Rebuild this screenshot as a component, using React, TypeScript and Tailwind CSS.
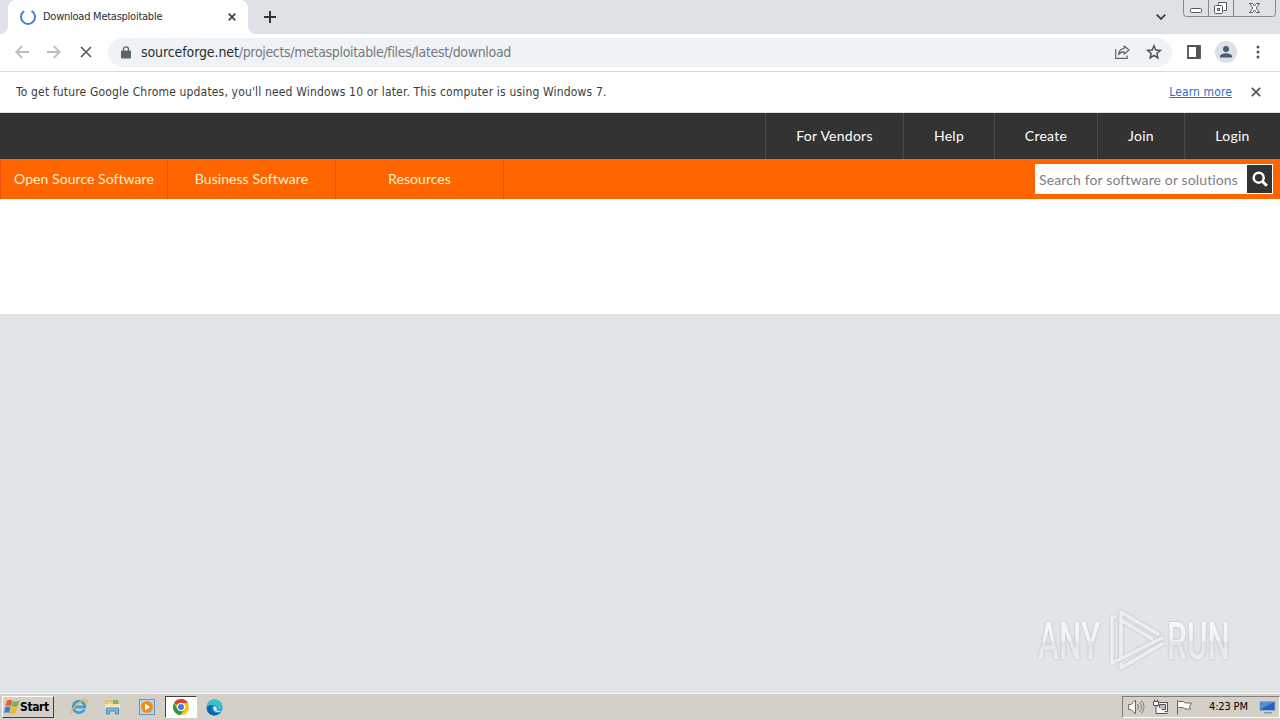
import React from 'react';

interface NavItem {
    label: string;
    width: string;
}

const topLinks: NavItem[] = [
    { label: 'For Vendors', width: 'w-[138px]' },
    { label: 'Help', width: 'w-[91px]' },
    { label: 'Create', width: 'w-[103px]' },
    { label: 'Join', width: 'w-[87px]' },
    { label: 'Login', width: 'w-[96px]' },
];

const menuLinks: string[] = ['Open Source Software', 'Business Software', 'Resources'];

const Cross: React.FC<{ size: number; color: string; stroke?: number }> = ({ size, color, stroke = 1.8 }) => (
    <svg width={size} height={size} viewBox="0 0 12 12" fill="none" stroke={color} strokeWidth={stroke}>
        <path d="M1 1l10 10M11 1L1 11" />
    </svg>
);

const TabStrip: React.FC = () => (
    <div className="relative flex h-[34px] bg-[#dee1e6]">
        <div className="relative ml-2 flex h-full w-60 items-center rounded-t-lg bg-white pl-3">
            <svg className="absolute bottom-0 -left-2" width="8" height="8"><path d="M8 0v8H0a8 8 0 0 0 8-8z" fill="#fff" /></svg>
            <svg className="absolute -right-2 bottom-0" width="8" height="8"><path d="M0 0v8h8a8 8 0 0 1-8-8z" fill="#fff" /></svg>
            <svg width="16" height="16" viewBox="0 0 16 16" fill="none" stroke="#4a7fd8" strokeWidth="2">
                <path d="M4.2 2.1A7 7 0 1 0 11.5 1.9" />
            </svg>
            <span className="mt-px ml-[7px] text-[11px] tracking-[-0.25px] whitespace-nowrap text-[#2b2c2f]">Download Metasploitable</span>
            <div className="absolute right-3 top-[13px]"><Cross size={8} color="#3c4043" stroke={2.4} /></div>
        </div>
        <svg className="mt-[11px] ml-4" width="12" height="12" stroke="#2f3236" strokeWidth="2"><path d="M6 0v12M0 6h12" /></svg>
        <svg className="mt-[14px] mr-[114px] ml-auto" width="10" height="6" fill="none" stroke="#3c4043" strokeWidth="1.8"><path d="M.7.7L5 5 9.3.7" /></svg>
        <svg className="absolute top-0 right-[3px]" width="94" height="18" fill="none">
            <path d="M.5 0v13.500a3 3 0 0 0 3 3h86a3 3 0 0 0 3-3V0M25.500 0v16M50.500 0v16" stroke="#85888d" />
            <rect x="7.500" y="8.500" width="11" height="4" rx="1" fill="#fff" stroke="#55585d" />
            <path d="M35.500 4.500V2.500h8v8h-3" fill="#fff" stroke="#55585d" />
            <rect x="31.500" y="5.500" width="8" height="8" rx="1" fill="#fff" stroke="#55585d" />
            <rect x="34.500" y="8.500" width="2" height="2" stroke="#55585d" />
            <path d="M66.500 3.500h3l2 2.500 2-2.500h3l-3.300 4.500 3.300 4.500h-3l-2-2.500-2 2.500h-3l3.300-4.500z" fill="#fff" stroke="#55585d" />
        </svg>
    </div>
);

const Toolbar: React.FC = () => (
    <div className="flex h-[38px] items-center border-b border-[#d9dadc] bg-white pb-px pl-[15px]">
        <svg width="14" height="14" fill="none" stroke="#babcbe" strokeWidth="1.8"><path d="M14 7H1.500M7.300 1L1.300 7l6 6" /></svg>
        <svg className="ml-[18px]" width="14" height="14" fill="none" stroke="#babcbe" strokeWidth="1.8"><path d="M0 7h12.500M6.700 1l6 6-6 6" /></svg>
        <div className="ml-[19px]"><Cross size={12} color="#5a5d61" stroke={1.7} /></div>
        <div className="ml-4 flex h-[29px] w-[1064px] items-center rounded-full bg-[#f0f3f5] pl-[13px]">
            <svg width="10" height="13" viewBox="0 0 10 13">
                <path d="M2.500 5V3.300a2.500 2.500 0 0 1 5 0V5" fill="none" stroke="#5f6368" strokeWidth="1.300" />
                <rect y="4.500" width="10" height="8" rx="1" fill="#5f6368" />
            </svg>
            <div className="mt-px ml-[10px] text-[14px] tracking-[-0.33px] whitespace-nowrap text-[#74787d]">
                <span className="tracking-[-0.1px] text-[#2c2d31]">sourceforge.net</span>/projects/metasploitable/files/latest/download
            </div>
            <svg className="ml-auto" width="15" height="14" fill="none" stroke="#5f6368" strokeWidth="1.200">
                <path d="M.7 4v9.300h11.500V10.500" />
                <path d="M9.200 1l4.800 4-4.800 4V6.800C6.500 6.700 4.800 7.600 3.500 9.600 4 6 6 3.700 9.200 3.300z" strokeLinejoin="round" />
            </svg>
            <svg className="mr-[10px] ml-4" width="16" height="16" viewBox="0 0 16 16" fill="none" stroke="#505458" strokeWidth="1.500">
                <path d="M8 1.800l1.800 4.200 4.500.4-3.400 3 1 4.500L8 11.500l-3.900 2.400 1-4.500-3.400-3L6.200 6z" />
            </svg>
        </div>
        <svg className="ml-[15px]" width="14" height="14">
            <path d="M1 1h12v12H1z" fill="none" stroke="#505357" strokeWidth="1.800" />
            <path d="M9 1h4v12H9z" fill="#505357" />
        </svg>
        <svg className="ml-[14px]" width="22" height="22">
            <circle cx="11" cy="11" r="11" fill="#dde1e7" />
            <circle cx="11" cy="8" r="3" fill="#4b5a75" />
            <path d="M5 16.500v-1.300c0-2 4-3 6-3s6 1 6 3v1.300z" fill="#4b5a75" />
        </svg>
        <svg className="ml-[19px]" width="4" height="14" fill="#505357">
            <circle cx="2" cy="2" r="1.500" /><circle cx="2" cy="7" r="1.500" /><circle cx="2" cy="12" r="1.500" />
        </svg>
    </div>
);

const InfoBar: React.FC = () => (
    <div className="flex h-[41px] items-center border-b border-[#e0e1e3] bg-white pr-[19px] pl-4 text-[12px]">
        <span className="tracking-[0.165px] text-[#3a3c40]">To get future Google Chrome updates, you'll need Windows 10 or later. This computer is using Windows 7.</span>
        <a className="mr-[19px] ml-auto tracking-[0.13px] text-[#2a6fc4] underline">Learn more</a>
        <Cross size={10} color="#4f5256" stroke={2} />
    </div>
);

const SiteHeader: React.FC = () => (
    <header className="font-['Lato',sans-serif] text-[14px] text-white">
        <div className="flex h-[46px] justify-end bg-[#333]">
            {topLinks.map((link) => (
                <a key={link.label} className={`flex items-center justify-center border-l border-[#4a4a4a] pb-0.5 tracking-[0.25px] ${link.width}`}>{link.label}</a>
            ))}
        </div>
        <div className="flex h-10 items-center bg-[#f60]">
            <nav className="flex h-full border-l border-[#f04b08]">
                {menuLinks.map((label) => (
                    <a key={label} className="flex h-full w-[168px] items-center justify-center border-r border-[#f04b08] pb-0.5 tracking-[0.06px] text-[#fff0d2] first:w-[167px]">{label}</a>
                ))}
            </nav>
            <div className="mr-[7px] ml-auto flex h-[30px] w-[238px] items-center bg-white py-px pr-px pl-1 text-[#808080]">
                <span className="tracking-[0.13px] whitespace-nowrap">Search for software or solutions</span>
                <div className="ml-auto flex h-full w-[25px] items-center justify-center bg-[#333]">
                    <svg width="16" height="16" fill="none" stroke="#fff"><circle cx="6.700" cy="6.700" r="5" strokeWidth="2.500" /><path d="M10.500 10.500l4.300 4.300" strokeWidth="3" /></svg>
                </div>
            </div>
        </div>
    </header>
);

const Watermark: React.FC = () => (
    <svg className="absolute right-[42px] bottom-[18px] overflow-visible" width="206" height="70" viewBox="0 0 206 70">
        <defs>
            <linearGradient id="fade" x1="0" y1="-36" x2="0" y2="0" gradientUnits="userSpaceOnUse">
                <stop offset="0" stopColor="#f5f7f9" />
                <stop offset="0.5" stopColor="#eff2f4" />
                <stop offset="0.52" stopColor="#dfe3e6" />
                <stop offset="1" stopColor="#eceff1" />
            </linearGradient>
            <filter id="edge" x="-10%" y="-10%" width="120%" height="120%">
                <feDropShadow dx="0" dy="0" stdDeviation="1" floodColor="#9da3a8" floodOpacity="0.75" />
            </filter>
        </defs>
        <g filter="url(#edge)">
            <g fill="url(#fade)" fontFamily="Roboto, sans-serif" fontSize="51" fontWeight="500">
                <text transform="translate(6 54) scale(.62 1)">ANY</text>
                <text transform="translate(135 54) scale(.62 1)">RUN</text>
            </g>
            <g fill="none" stroke="#eceff1" strokeWidth="3.500" strokeLinejoin="round" strokeLinecap="round">
                <path d="M83 12h-3v46l50-25" />
                <path d="M126 29L89 7v45M89 15l31 19" />
                <path d="M89 59v4l41-24" />
            </g>
        </g>
    </svg>
);

const Taskbar: React.FC = () => (
    <footer className="flex h-[27px] items-center border-t border-[#f3f1ed] bg-[#d4d0c8] text-black">
        <div className="ml-[2px] flex h-[22px] w-[52px] items-center border border-t-white border-r-[#404040] border-b-[#404040] border-l-white pl-px">
            <svg width="16" height="16" viewBox="0 0 16 16">
                <path d="M3 1.500Q5.500 0 8.500 1.500L7 7.200Q4 5.800 1.300 7.200z" fill="#e5602c" />
                <path d="M9.200 1.900Q12 3.200 15.500 1.500L13.700 7.200Q10.700 8.700 7.700 7.500z" fill="#7cb43a" />
                <path d="M1.100 8Q4 6.800 6.600 8L5.200 14Q2.500 12.500 0 14z" fill="#3982cc" />
                <path d="M7.300 8.400Q10.300 9.500 13.300 8.100L11.800 14Q9 15.700 5.900 14.400z" fill="#f4b82a" />
            </svg>
            <span className="text-[12px] font-bold tracking-[-0.4px]">Start</span>
        </div>
        {/* quick launch */}
        <svg className="ml-4" width="18" height="18" viewBox="0 0 18 18" fill="none">
            <path d="M14.200 11.500A5.800 5.800 0 1 1 14.800 9H5" stroke="#3f9edb" strokeWidth="2.800" />
            <path d="M2 16C-1 12 12 .5 16.500 2c1 .5.500 2-.5 3.500" stroke="#e9b93e" strokeWidth="1.400" />
        </svg>
        <svg className="ml-4" width="18" height="18" viewBox="0 0 18 18">
            <path d="M2 3h5l1 1h7v9H2z" fill="#efd382" stroke="#d8b758" />
            <path d="M9 2h5v4H9z" fill="#82b66c" />
            <path d="M1 6h15v5H1z" fill="#f7e7a7" />
            <path d="M2.500 16v-6h12v6h-3v-3h-6v3z" fill="#79b5dc" stroke="#4e91bf" />
        </svg>
        <svg className="ml-4" width="18" height="18" viewBox="0 0 18 18">
            <rect x="1.500" y="1.500" width="15" height="15" fill="#b8d6ee" stroke="#5c99cc" />
            <circle cx="9" cy="9" r="6" fill="#f58a16" /><path d="M7 5.500l5 3.500-5 3.500z" fill="#fff" />
        </svg>
        <div className="ml-[9px] flex h-[22px] w-8 items-center justify-center border border-t-[#404040] border-r-white border-b-white border-l-[#404040] bg-white">
            <svg width="16" height="16" viewBox="0 0 16 16">
                <circle cx="8" cy="8" r="8" fill="#fbc116" />
                <path d="M8 8L1.100 4A8 8 0 0 1 14.900 4H8z" fill="#e33b2e" />
                <path d="M1.100 4A8 8 0 0 0 7.500 16l4-6H4.500z" fill="#279847" />
                <circle cx="8" cy="8" r="4.200" fill="#fff" /><circle cx="8" cy="8" r="3" fill="#3b7de0" />
            </svg>
        </div>
        <svg className="ml-[9px]" width="17" height="17" viewBox="0 0 17 17">
            <circle cx="8.500" cy="8.500" r="8" fill="#1788d4" />
            <path d="M.5 9C.5 4 4 .5 8.500.5c5 0 8 3.500 8 7 0 3-3 4-5.500 3 1-2-.5-4.500-4-4.500C3.500 6 1 7 .5 9z" fill="#39c4c2" />
            <path d="M7 6c-3 4 0 9 6 8.500-4 4-12 1.500-12.300-5.500C1 7 4 5.500 7 6z" fill="#1463ae" />
            <path d="M8 7c3.500 1 3 3 2.500 4 2 1.500 4 1 5.500 0-1.200 3-7 3-8.500-.5C7 9 7.300 8 8 7z" fill="#d4e5ed" />
        </svg>
        <div className="ml-auto flex h-[22px] w-[158px] items-center border border-t-[#808080] border-r-white border-b-white border-l-[#808080] pl-[5px]">
            <svg width="17" height="16" fill="#f7f7f5" stroke="#686868">
                <path d="M.5 5.500H3L7.500 1v14L3 10.500H.5z" />
                <path d="M9.500 5q2 3 0 6M11.500 3q4 5 0 10M13.500 1.500q5 6.500 0 13" fill="none" strokeWidth=".8" />
            </svg>
            <svg className="ml-[7px]" width="17" height="16" fill="#f5f5f3" stroke="#555">
                <rect x="5.500" y="3.500" width="10" height="9" /><path d="M7.500 5.500h6v5h-6z" fill="#bbb" />
                <path d="M1.500 2.500h5v4h-5zM2.500.5v2M5.500.5v2M4 6.500v8h11.500M7 14.500h7" />
            </svg>
            <svg className="ml-[7px]" width="17" height="16" fill="#fff" stroke="#666"><path d="M1.500 1v14.500M2.500 2.500h5q1 2 3 1.500h5l-2 3.500 1 2.500H9q-1-1.500-3-1.500H2.500" /></svg>
            <span className="mt-px ml-4 text-[11px] tracking-[-0.15px] whitespace-nowrap">4:23 PM</span>
            <svg className="mr-[3px] ml-auto" width="17" height="16">
                <path d="M1 2.500h15v9H1z" fill="#2464b4" stroke="#8eaed0" /><path d="M2 3h13L2 10z" fill="#4d91d7" /><path d="M5 13h8v1.500H5z" fill="#8797a9" />
            </svg>
        </div>
    </footer>
);

const App: React.FC = () => {
    return (
        <div className="flex h-[720px] w-[1280px] flex-col overflow-hidden bg-white font-['DejaVu_Sans_Condensed','DejaVu_Sans',sans-serif]">
            <TabStrip />
            <Toolbar />
            <InfoBar />
            <SiteHeader />
            <div className="h-[115px] bg-white" />
            <main className="relative flex-1 bg-[#e1e5e8]">
                <Watermark />
            </main>
            <Taskbar />
        </div>
    );
};

export default App;
